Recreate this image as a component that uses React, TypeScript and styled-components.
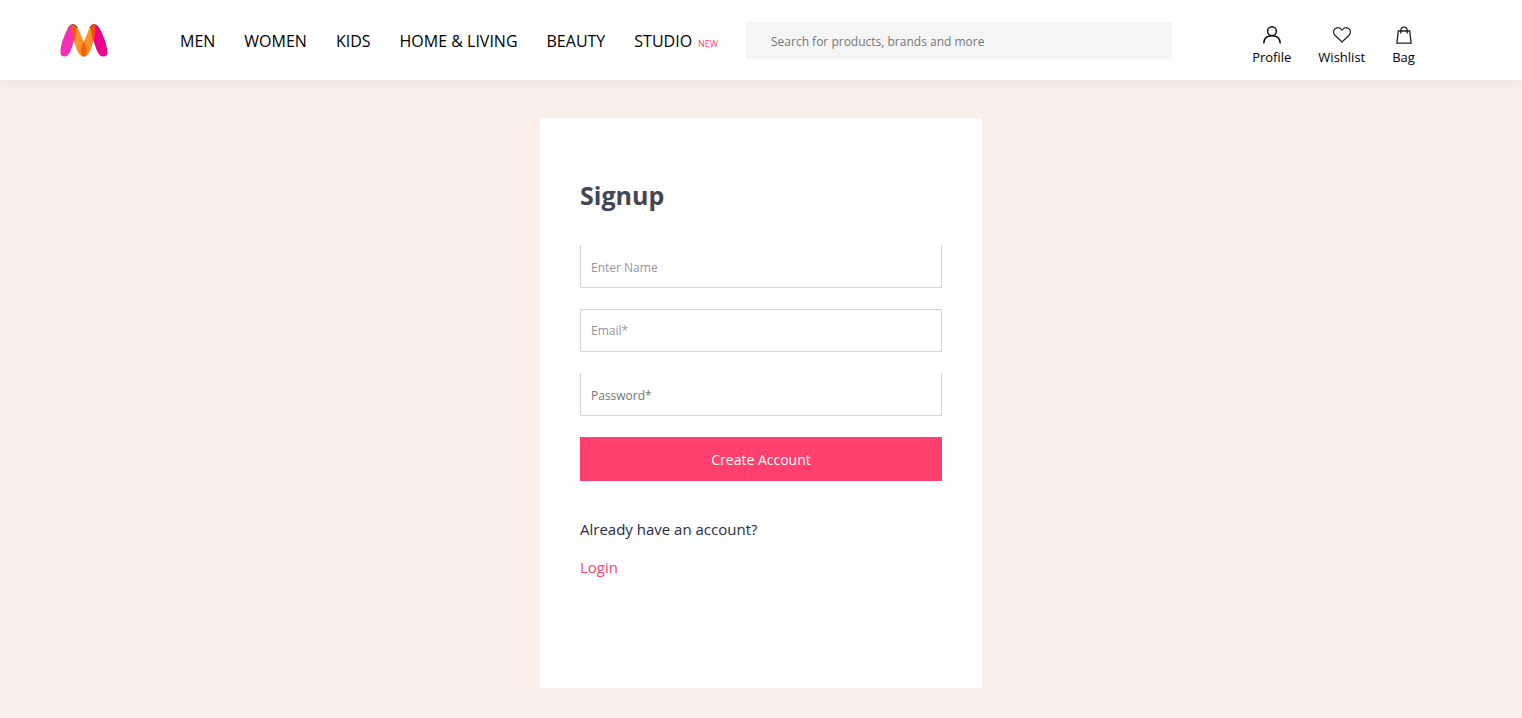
import React from "react";
import styled, { createGlobalStyle } from "styled-components";

const GlobalStyle = createGlobalStyle`
  *, *::before, *::after { box-sizing: border-box; }
  body {
    margin: 0;
    background: #fceee9;
    font-family: "Segoe UI", "Open Sans", "Noto Sans", sans-serif;
    color: #000;
  }
  input, button { font-family: inherit; }
`;

const Page = styled.div`
  min-height: 100vh;
  display: flex;
  flex-direction: column;
  background: #fceee9;
`;

const Header = styled.header`
  display: flex;
  align-items: center;
  height: 80px;
  padding-left: 60px;
  background: #fff;
  box-shadow: 0 4px 12px rgba(0, 0, 0, 0.05);
`;

const LogoLink = styled.a`
  flex: none;
  width: 48px;
  height: 38px;
  margin-right: 72px;
  svg { display: block; }
`;

const Nav = styled.nav`
  display: flex;
  align-items: baseline;
  gap: 29px;
  flex: none;
  min-width: 566px;
  padding-top: 2px;
`;

const NavLink = styled.a`
  font-size: 16px;
  line-height: 20px;
  color: #000;
  text-decoration: none;
  white-space: nowrap;
`;

const NewTag = styled.sup`
  margin-left: 6px;
  font-size: 9px;
  line-height: 12px;
  vertical-align: baseline;
  color: #ff3f6c;
`;

const SearchInput = styled.input`
  width: 28vw;
  height: 37px;
  padding: 2px 25px 0;
  border: 0;
  border-radius: 0;
  background: #f5f5f6;
  font-size: 12px;
  color: #282c3f;
  &::placeholder { color: #757575; opacity: 1; }
`;

const Actions = styled.div`
  display: flex;
  align-items: flex-start;
  gap: 27px;
  margin-left: 80px;
  padding-top: 12px;
`;

const Action = styled.a`
  display: flex;
  flex-direction: column;
  align-items: center;
  gap: 4px;
  font-size: 13px;
  line-height: 18px;
  color: #000;
  text-decoration: none;
  svg { display: block; }
`;

const Main = styled.main`
  flex: 1;
  display: flex;
  justify-content: center;
  align-items: flex-start;
  padding: 38px 16px 30px;
`;

const Card = styled.form`
  width: 442px;
  max-width: 100%;
  padding: 59px 40px 109px;
  background: #fff;
`;

const Title = styled.h1`
  margin: 0 0 32px;
  font-size: 25px;
  line-height: 36px;
  font-weight: 700;
  color: #424553;
`;

const Fields = styled.div`
  display: flex;
  flex-direction: column;
  gap: 21px;
`;

const Field = styled.input<{ $openTop?: boolean; $hint?: string }>`
  width: 100%;
  height: 43px;
  padding: ${(p) => (p.$openTop ? "2px 10px 0" : "0 10px")};
  border: 1px solid #d4d5d9;
  border-top-width: ${(p) => (p.$openTop ? "0" : "1px")};
  border-radius: 0;
  background: #fff;
  font-size: 12px;
  color: #282c3f;
  &::placeholder { color: ${(p) => p.$hint ?? "#94969f"}; opacity: 1; }
`;

const SubmitButton = styled.button`
  height: 44px;
  border: 0;
  background: #ff3f6c;
  color: #fff;
  font-size: 14px;
  cursor: pointer;
`;

const Prompt = styled.p`
  margin: 36px 0 14px;
  font-size: 15px;
  line-height: 24px;
  color: #282c3f;
`;

const LoginLink = styled.a`
  display: block;
  width: fit-content;
  font-size: 15px;
  line-height: 24px;
  color: #ff3f6c;
  text-decoration: none;
`;

const Logo = () => (
  <svg width="48" height="38" viewBox="0 -2 48 38" aria-hidden="true">
    <path d="M13 1.5C10 1.5 8 4.5 6 9C3 15.500 .4 24 .4 29C.4 32 2 33.600 4.500 33.600C9.500 33.600 11.500 26 13.500 19L17 4.500C15.500 2.500 14.500 1.500 13 1.500Z" fill="#f32fb4" />
    <path d="M34 1.500C37 1.500 39.500 4.500 41.500 9C44.500 15.500 47.400 24 47.400 29C47.400 32 46 33.600 43.500 33.600C38.500 33.600 36.500 27 34 19L30 4.500C32 2.500 33 1.500 34 1.500Z" fill="#ec008c" />
    <path d="M13.500 1.500C16 1.500 18 5 20 10L23.700 19L27.500 10C29.500 5 31 1.500 33.500 1.500C34.500 1.500 35 2 35.200 2.800C35.200 9 33.500 20 30.500 27C28.500 31.500 26.500 33.600 23.700 33.600C21 33.600 19 31.500 17 27C14 20 12.200 9 12.200 2.800C12.400 2 12.800 1.500 13.500 1.500Z" fill="#ff912b" />
    <path d="M13.500 1.500C14.800 1.500 15.800 2.300 16.600 3.600C16.700 9 15.500 15 14.200 19.500C12.700 13.500 12 7 12.200 2.800C12.400 2 12.800 1.500 13.500 1.500Z" fill="#f05a10" />
    <path d="M33.500 1.500C32.500 1.500 31.500 2.300 30.700 3.600C30.800 9 32 15 33.300 19.500C34.700 13.500 35.400 7 35.200 2.800C35 2 34.500 1.500 33.500 1.500Z" fill="#f0500f" />
    <path d="M23.700 18.500C21.300 23 20.600 27 21 30C21.400 32.500 22.500 33.600 23.700 33.600C25 33.600 26.100 32.500 26.500 30C26.900 27 26.200 23 23.700 18.500Z" fill="#fb5f0a" />
    <path d="M8 5.500C9.500 2.800 11 1.700 13 1.700C15 1.700 16.400 3 17.500 5" fill="none" stroke="#a8322a" strokeWidth="1" />
    <path d="M29.800 5C30.900 2.800 32 1.700 34 1.700C36.200 1.700 37.800 3 39.200 5.500" fill="none" stroke="#a8322a" strokeWidth="1" />
  </svg>
);

const ProfileIcon = () => (
  <svg width="18" height="18" viewBox="0 0 18 18" fill="none" stroke="#111" strokeWidth="1.500" aria-hidden="true">
    <circle cx="9" cy="5.200" r="4.400" />
    <path d="M.8 17.500C.8 12.500 4 9.800 9 9.800C14 9.800 17.200 12.500 17.200 17.500" />
  </svg>
);

const HeartIcon = () => (
  <svg width="18" height="18" viewBox="0 0 18 18" fill="none" stroke="#222" strokeWidth="1.200" strokeLinejoin="round" aria-hidden="true">
    <path d="M9 16L2 9.300C-.2 7 .3 3.700 2.400 2.400C4.700 1 7.400 1.600 9 4.200C10.600 1.600 13.300 1 15.600 2.400C17.700 3.700 18.200 7 16 9.300Z" />
  </svg>
);

const BagIcon = () => (
  <svg width="16" height="18" viewBox="0 0 16 18" fill="none" stroke="#222" strokeWidth="1.300" aria-hidden="true">
    <path d="M2.300 5H13.700L15.100 17.200H.9Z" />
    <path d="M4.800 7.500V4.500C4.800 2.400 6.100 1.200 8 1.200C9.900 1.200 11.200 2.400 11.200 4.500V7.500" />
  </svg>
);

const categories = ["Men", "Women", "Kids", "Home & Living", "Beauty"];

export default function App() {
  return (
    <Page>
      <GlobalStyle />
      <Header>
        <LogoLink href="#" aria-label="Home"><Logo /></LogoLink>
        <Nav>
          {categories.map((name) => (
            <NavLink key={name} href="#">{name.toUpperCase()}</NavLink>
          ))}
          <NavLink href="#">STUDIO<NewTag>NEW</NewTag></NavLink>
        </Nav>
        <SearchInput type="search" aria-label="Search" placeholder="Search for products, brands and more" />
        <Actions>
          <Action href="#"><ProfileIcon />Profile</Action>
          <Action href="#"><HeartIcon />Wishlist</Action>
          <Action href="#"><BagIcon />Bag</Action>
        </Actions>
      </Header>
      <Main>
        <Card onSubmit={(e: React.FormEvent) => e.preventDefault()}>
          <Title>Signup</Title>
          <Fields>
            <Field $openTop type="text" aria-label="Name" placeholder="Enter Name" />
            <Field type="email" aria-label="Email" placeholder="Email*" />
            <Field $openTop $hint="#757575" type="password" aria-label="Password" placeholder="Password*" />
            <SubmitButton type="submit">Create Account</SubmitButton>
          </Fields>
          <Prompt>Already have an account?</Prompt>
          <LoginLink href="#">Login</LoginLink>
        </Card>
      </Main>
    </Page>
  );
}
